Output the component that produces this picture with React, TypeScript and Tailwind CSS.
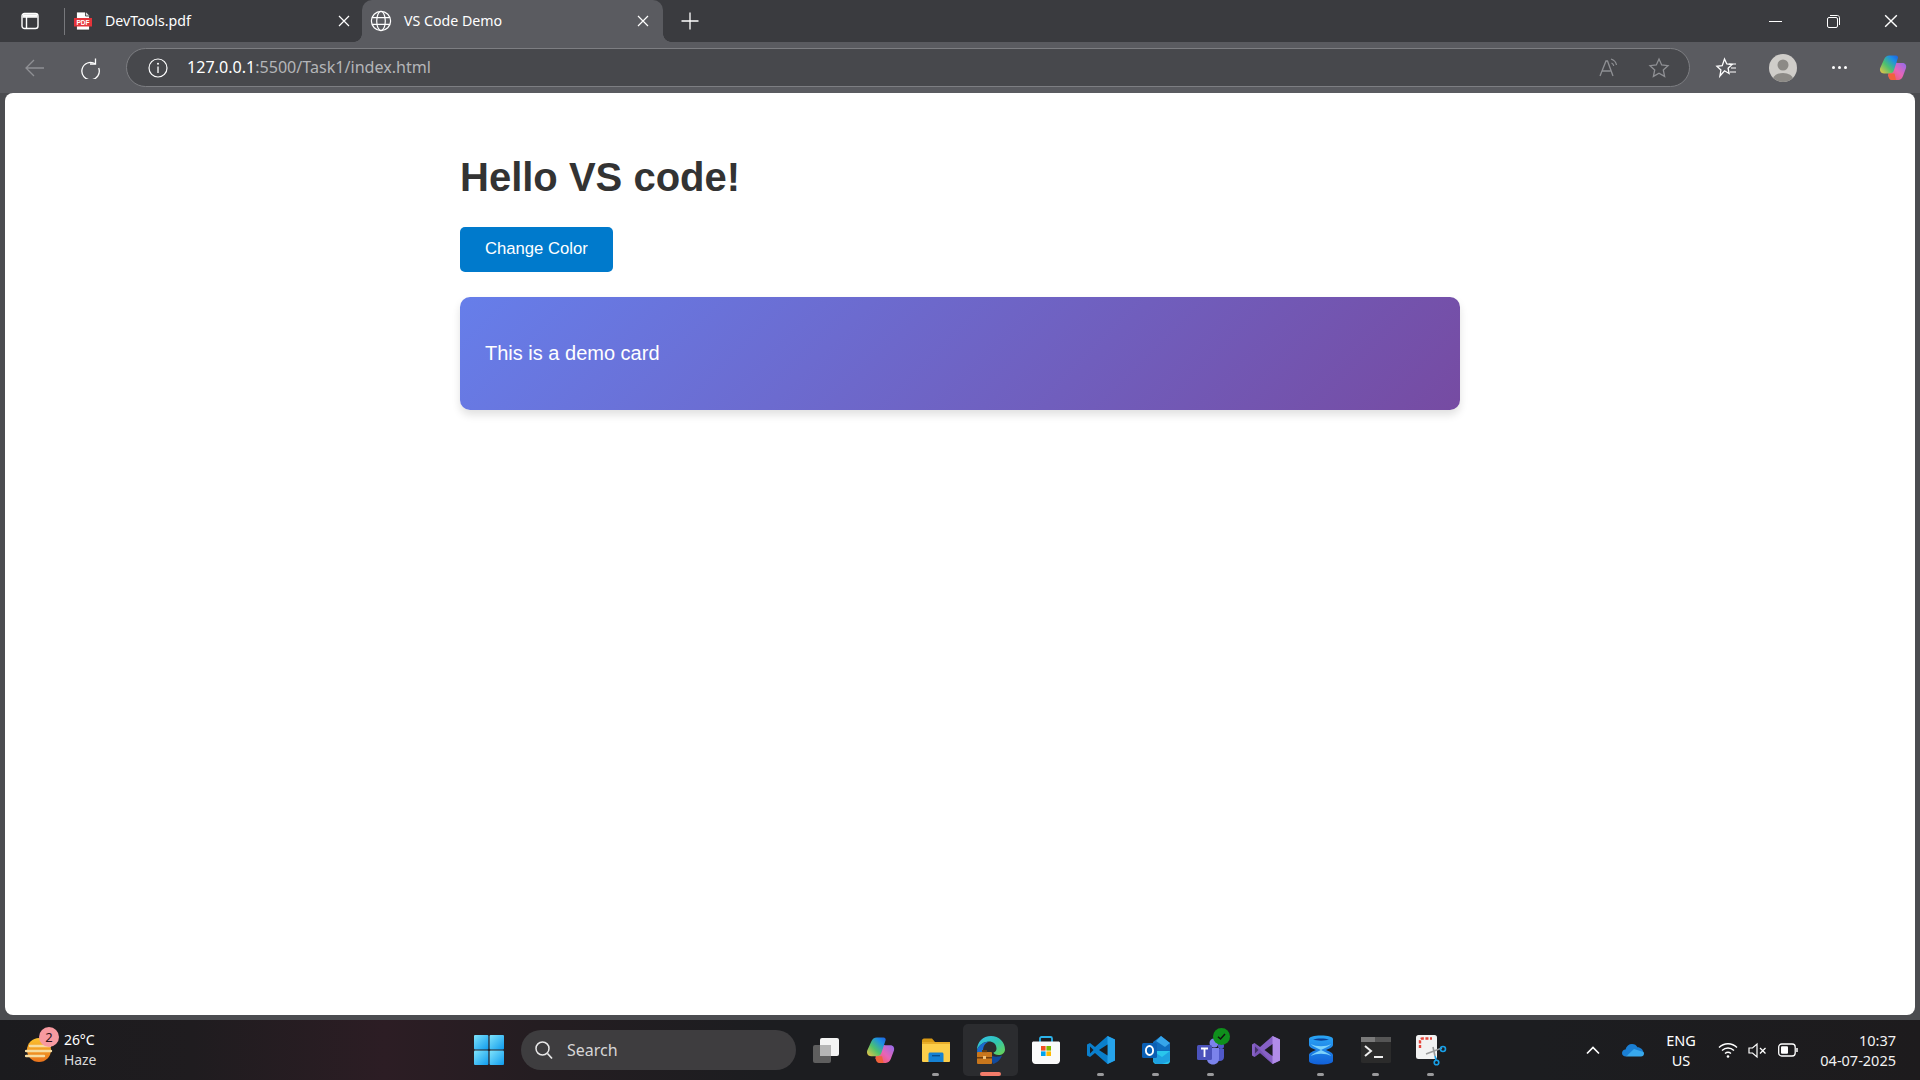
import React from "react";

const ui = { fontFamily: '"Noto Sans", "Open Sans", sans-serif' };

function Svg({ s = 20, w, h, vb = "0 0 20 20", c = "", children }: any) {
  return (
    <svg width={w ?? s} height={h ?? s} viewBox={vb} fill="none" className={"block shrink-0 " + c}>
      {children}
    </svg>
  );
}

const SidebarIcon = () => (
  <Svg s={18} vb="0 0 18 18">
    <rect x="1" y="1.5" width="16" height="15" rx="2.5" stroke="#fff" strokeWidth="1.4" />
    <path d="M1.5 5h15M5.5 5v11" stroke="#fff" strokeWidth="1.4" />
    <rect x="2" y="2.2" width="14" height="2.6" fill="#fff" />
  </Svg>
);

const PdfIcon = () => (
  <Svg s={20} vb="0 0 20 20">
    <path d="M3.5 1h9l4 4v14h-13z" fill="#fff" stroke="#333" strokeWidth=".8" />
    <path d="M12.5 1v4h4" fill="#ddd" stroke="#333" strokeWidth=".8" />
    <rect x="1" y="7" width="18" height="8.5" fill="#e5343a" />
    <text x="10" y="13.7" textAnchor="middle" fontSize="6.6" fontWeight="700" fill="#fff" fontFamily="Liberation Sans, sans-serif">PDF</text>
  </Svg>
);

const Globe = () => (
  <Svg s={22} vb="0 0 22 22">
    <g stroke="#fff" strokeWidth="1.2">
      <circle cx="11" cy="11" r="9.6" />
      <ellipse cx="11" cy="11" rx="4.3" ry="9.6" />
      <path d="M2 7.6h18M2 14.4h18" />
    </g>
  </Svg>
);

const X = ({ s = 12 }: { s?: number }) => (
  <Svg s={s} vb="0 0 12 12">
    <path d="M1 1l10 10M11 1L1 11" stroke="#fff" strokeWidth="1.2" />
  </Svg>
);

const CopilotMark = ({ s = 28, id = "a" }: { s?: number; id?: string }) => (
  <Svg s={s} vb="0 0 28 28">
    <defs>
      <linearGradient id={"cpA" + id} x1="0" y1="1" x2="1" y2="0">
        <stop offset="0" stopColor="#f6c344" />
        <stop offset=".4" stopColor="#4fc26c" />
        <stop offset=".75" stopColor="#1c8fe6" />
        <stop offset="1" stopColor="#1f5fe0" />
      </linearGradient>
      <linearGradient id={"cpB" + id} x1="0" y1="1" x2="1" y2="0">
        <stop offset="0" stopColor="#f4554a" />
        <stop offset=".5" stopColor="#e765b8" />
        <stop offset="1" stopColor="#8a6cf0" />
      </linearGradient>
    </defs>
    <path d="M12 8l-2 8-1 6 4 4h6c2.500 0 4-1.500 5-4l3-8c.8-2.800-.8-5-3.500-5H19z" fill={`url(#cpB${id})`} />
    <path d="M10.500 1.500H17c1.300 0 2.200 1 2 2.300L15 16c-.6 2-1.900 3.500-4 3.500H5c-3 0-4.700-2.800-3.800-5.500L5 5.500C6 3 8 1.500 10.500 1.500z" fill={`url(#cpA${id})`} />
    <path d="M10 19.500h5.500l1.500 6.500h-4.500C10.500 26 9.500 24 9.500 22z" fill="#f0623c" />
  </Svg>
);

const TaskView = () => (
  <Svg s={28} vb="0 0 28 28">
    <rect x="1" y="9" width="18" height="18" rx="2" fill="#5e5e5e" />
    <rect x="8" y="2" width="19" height="18" rx="2" fill="#f4f4f4" />
    <rect x="8" y="9" width="11" height="11" fill="#b5b5b5" />
  </Svg>
);

const Folder = () => (
  <Svg s={30} vb="0 0 30 30">
    <path d="M1 5.500C1 4.500 1.800 3.500 3 3.500h8l3 3.500H1z" fill="#d99a14" />
    <rect x="1" y="7" width="28" height="20" rx="1" fill="#fcce4a" />
    <rect x="1" y="7" width="28" height="2" fill="#e9ae2a" />
    <path d="M7.500 19c0-.8.700-1.500 1.500-1.500h12c.8 0 1.500.7 1.500 1.500v8h-15z" fill="#1682d4" />
    <rect x="11" y="20" width="8" height="1.400" fill="#0a4f8c" />
  </Svg>
);

const EdgeBiz = () => (
  <Svg s={30} vb="0 0 30 30">
    <defs>
      <linearGradient id="edA" x1="0" y1="0" x2="1" y2="1">
        <stop offset="0" stopColor="#35c1f1" />
        <stop offset=".5" stopColor="#2fc5b0" />
        <stop offset="1" stopColor="#6dd34d" />
      </linearGradient>
    </defs>
    <path d="M1 15C1 7 7 1 15 1c8 0 14 6 14 13.500 0 3.500-3 5.500-6.500 5.500-2.500 0-5-1-5-2.500 2-.5 3-2 3-4C20.500 9 17 6.500 13 6.500 8 6.500 3 10 1 15z" fill="url(#edA)" />
    <path d="M1 15c2-5 7-8.500 12-8.500-4 1.500-6 5-6 9 0 4.500 3 9 8.500 11-.5 1-1 1.500-.5 2.500C7 29 1 23 1 15z" fill="#1a6cd0" />
    <path d="M16 21c3 1 7 1 10-.5-1.500 4-5 7.500-9 8.500-1.500-3-1.500-6-1-8z" fill="#114a9e" />
    <rect x="1" y="17" width="15" height="12" rx="1" fill="#c8761c" />
    <rect x="1" y="22" width="15" height="1.500" fill="#6e3c0c" />
    <rect x="6" y="15" width="5" height="2.200" fill="#5e3c14" />
    <rect x="7" y="21" width="3" height="3" fill="#f1c27a" />
  </Svg>
);

const Store = () => (
  <Svg s={30} vb="0 0 30 30">
    <path d="M9 7V3.500c0-1 .8-1.500 1.500-1.500h9c.7 0 1.500.5 1.500 1.500V7" stroke="#2cb3ea" strokeWidth="1.800" />
    <path d="M1 8c0-1 .8-1.500 1.500-1.500h25c.7 0 1.500.5 1.500 1.500v17.500c0 1.900-1.500 3.500-3.500 3.500h-21C2.500 29 1 27.400 1 25.500z" fill="#fafafa" />
    <rect x="10" y="11" width="4.600" height="4.600" fill="#f25022" />
    <rect x="15.400" y="11" width="4.600" height="4.600" fill="#7fba00" />
    <rect x="10" y="16.400" width="4.600" height="4.600" fill="#00a4ef" />
    <rect x="15.400" y="16.400" width="4.600" height="4.600" fill="#ffb900" />
  </Svg>
);

const VSCode = () => (
  <Svg s={30} vb="0 0 30 30">
    <path d="M21.500 1l7.500 3.500v21L21.500 29 9 18l-5 4-3-1.500V9.500L4 8l5 4z" fill="#0a7fcc" />
    <path d="M21.500 1l7.500 3.500v21L21.500 29z" fill="#26a3ea" />
    <path d="M21.500 9.500L13 15l8.500 5.500z" fill="#1c1d20" />
    <path d="M4 11.500V18.500L7.500 15z" fill="#1c1d20" />
  </Svg>
);

const Outlook = () => (
  <Svg s={30} vb="0 0 30 30">
    <path d="M12 7l8-6 9 7v8H12z" fill="#0f6cbd" />
    <path d="M20 1l9 7-5 4-9-6z" fill="#36a5ea" />
    <path d="M12 16h17v10c0 1.500-1 3-3 3H15c-1.500 0-3-1.500-3-3z" fill="#29c6ec" />
    <path d="M12 16l9 6 8-6v10L21 29h-6l-3-3z" fill="#1ea1e0" />
    <rect x="1" y="8" width="15" height="15" rx="1.500" fill="#0a5fb4" />
    <ellipse cx="8.500" cy="15.500" rx="3.600" ry="4.500" stroke="#fff" strokeWidth="1.900" />
  </Svg>
);

const Teams = () => (
  <div className="relative w-[30px] h-[30px]">
    <Svg s={30} vb="0 0 30 30">
      <circle cx="18" cy="8" r="4.500" fill="#7b83eb" />
      <circle cx="25" cy="11" r="3" fill="#5059c9" />
      <path d="M21 14h7v8c0 2.500-2 4-4 4h-3z" fill="#5059c9" />
      <path d="M9 13h14v11c0 3-2.500 5.500-6 5.500S11 27 11 24z" fill="#7b83eb" />
      <rect x="1" y="10" width="15" height="15" rx="1.500" fill="#4b53bc" />
      <path d="M5 13.500h7M8.500 13.500V22" stroke="#fff" strokeWidth="1.800" />
    </Svg>
    <div className="absolute -top-[7px] -right-[4px] w-[17px] h-[17px] rounded-full bg-[#0f8f1c] flex items-center justify-center">
      <Svg s={11} vb="0 0 11 11"><path d="M2 5.800L4.500 8 9 3" stroke="#111" strokeWidth="1.500" /></Svg>
    </div>
  </div>
);

const VS = () => (
  <Svg s={30} vb="0 0 30 30">
    <path d="M21.500 1L29 4.500v21L21.500 29 9 18 3.500 22 1 20.500V9.500L3.500 8 9 12z" fill="#8661c5" />
    <path d="M21.500 1L29 4.500v21L21.500 29z" fill="#b18ce8" />
    <path d="M21.500 9l-8 6 8 6z" fill="#1c1d20" />
    <path d="M4 11.500v7l3.500-3.500z" fill="#1c1d20" />
    <path d="M3.500 8L21.500 29 9 18 3.500 22z" fill="#6b48ab" opacity=".5" />
  </Svg>
);

const Cross = () => (
  <Svg s={30} vb="0 0 30 30">
    <defs>
      <linearGradient id="xA" x1="0" y1="0" x2="0" y2="1">
        <stop offset="0" stopColor="#2aa5f5" />
        <stop offset="1" stopColor="#1260d8" />
      </linearGradient>
    </defs>
    <path d="M3 4c0-2 5-3.500 12-3.500S27 2 27 4v6c0 2-4 4-7 5 3 1 7 3 7 5v6c0 2-5 3.500-12 3.500S3 28 3 26v-6c0-2 4-4 7-5-3-1-7-3-7-5z" fill="url(#xA)" />
    <path d="M5 9c5 3 15 3 20 0-1 2-6 4-10 6-4-2-9-4-10-6zM5 21c1-2 6-4 10-6 4 2 9 4 10 6-5-3-15-3-20 0z" fill="#7dd3fb" />
    <path d="M7 4.500c4-1.500 12-1.500 16 0-4 1.500-12 1.500-16 0z" fill="#0b3e94" />
  </Svg>
);

const Terminal = () => (
  <Svg s={30} vb="0 0 30 30">
    <rect x="0" y="2" width="30" height="26" rx="1.500" fill="#2b2b2b" />
    <rect x="0" y="2" width="30" height="5" fill="#7a7a7a" />
    <rect x="14" y="2" width="16" height="5" fill="#555" />
    <path d="M4 11l6 5-6 5" stroke="#eee" strokeWidth="2" />
    <path d="M13 22h9" stroke="#eee" strokeWidth="2" />
  </Svg>
);

const Snip = () => (
  <Svg s={32} vb="0 0 32 32">
    <rect x="1" y="1" width="21" height="24" rx="2.500" fill="#f2f2f2" />
    <path d="M5 14V7c0-1.500 1-2.500 2.500-2.500H17" stroke="#e5453a" strokeWidth="2.400" strokeDasharray="3 1.600" />
    <path d="M11 20l16-6" stroke="#999" strokeWidth="1.600" />
    <path d="M18 13l2 9" stroke="#999" strokeWidth="1.600" />
    <circle cx="28" cy="15" r="2.500" stroke="#18a0e8" strokeWidth="1.600" />
    <path d="M20 22l1 4" stroke="#18a0e8" strokeWidth="1.600" />
    <circle cx="21.500" cy="28.500" r="2.300" stroke="#18a0e8" strokeWidth="1.600" />
  </Svg>
);

const apps: [React.ReactNode, string][] = [
  [<TaskView />, ""],
  [<CopilotMark s={29} id="t" />, ""],
  [<Folder />, "dot"],
  [<EdgeBiz />, "active"],
  [<Store />, ""],
  [<VSCode />, "dot"],
  [<Outlook />, "dot"],
  [<Teams />, "dot"],
  [<VS />, ""],
  [<Cross />, "dot"],
  [<Terminal />, "dot"],
  [<Snip />, "dot"],
];

function TaskIcon({ icon, state }: { icon: React.ReactNode; state: string }) {
  return (
    <div className={"relative w-[55px] h-[52px] flex items-center justify-center rounded-[5px] " + (state === "active" ? "bg-[#2b2c2f]" : "")}>
      {icon}
      {state === "dot" && <div className="absolute bottom-0 left-[24px] w-[7px] h-[3px] rounded-full bg-[#9a9a9c]" />}
      {state === "active" && <div className="absolute bottom-0 left-[17px] w-[21px] h-[4px] rounded-full bg-[#f47c6a]" />}
    </div>
  );
}

export default function App() {
  return (
    <div className="w-[1920px] h-[1080px] overflow-hidden flex flex-col bg-[#4b4c50]" style={ui}>
      {/* title bar */}
      <div className="h-[42px] shrink-0 bg-[#3a3b3f] flex items-center text-white">
        <div className="ml-[21px] w-[18px]"><SidebarIcon /></div>
        <div className="ml-[25px] w-px h-[27px] bg-[#77787c]" />
        <div className="ml-[8px] w-[20px]"><PdfIcon /></div>
        <div className="ml-[12px] w-[235px] text-[14.2px] leading-none">DevTools.pdf</div>
        <div className="w-[12px] -ml-[2px]"><X /></div>
        <div className="relative ml-[12px] self-stretch w-[301px] bg-[#5a5b60] rounded-t-[10px] flex items-center">
          <div className="ml-[8px]"><Globe /></div>
          <div className="ml-[12px] w-[233px] text-[14.2px] leading-none">VS Code Demo</div>
          <X />
          <div className="absolute bottom-0 -left-[8px] w-[8px] h-[8px] bg-[radial-gradient(circle_at_0_0,#3a3b3f_7.5px,#5a5b60_8px)]" />
          <div className="absolute bottom-0 -right-[8px] w-[8px] h-[8px] bg-[radial-gradient(circle_at_100%_0,#3a3b3f_7.5px,#5a5b60_8px)]" />
        </div>
        <div className="ml-[18px]">
          <Svg s={18} vb="0 0 18 18"><path d="M9 0.500v17M0.500 9h17" stroke="#fff" strokeWidth="1.300" /></Svg>
        </div>
        <div className="ml-auto flex items-center">
          <div className="w-[58px] flex justify-center"><div className="w-[13px] h-px bg-white" /></div>
          <div className="w-[58px] flex justify-center">
            <Svg s={13} vb="0 0 13 13">
              <rect x=".5" y="2.500" width="10" height="10" rx="1.500" stroke="#fff" />
              <path d="M3 .5h7.500c1 0 2 1 2 2V10" stroke="#fff" />
            </Svg>
          </div>
          <div className="w-[58px] flex justify-center mr-[0px]"><X s={14} /></div>
        </div>
      </div>

      {/* toolbar */}
      <div className="h-[51px] shrink-0 bg-[#5a5b60] flex items-center">
        <div className="ml-[24px]">
          <Svg s={22} vb="0 0 22 22"><path d="M20 11H2M10 3l-8 8 8 8" stroke="#8f9094" strokeWidth="1.300" /></Svg>
        </div>
        <div className="ml-[33px]">
          <Svg s={22} vb="0 0 22 22">
            <path d="M16.500 1.500v5.500H11" stroke="#fff" strokeWidth="1.300" />
            <path d="M16.300 6.800A8.700 8.700 0 1 0 19.700 11" stroke="#fff" strokeWidth="1.300" />
          </Svg>
        </div>
        <div className="ml-[25px] w-[1564px] h-[39px] rounded-full border border-[#7d7e82] bg-[#47484c] flex items-center">
          <div className="ml-[21px]">
            <Svg s={20} vb="0 0 20 20">
              <circle cx="10" cy="10" r="9" stroke="#fff" strokeWidth="1.200" />
              <path d="M10 8.500V15" stroke="#fff" strokeWidth="1.300" />
              <circle cx="10" cy="5.800" r="1" fill="#fff" />
            </Svg>
          </div>
          <div className="ml-[19px] text-[16.1px] text-[#b4b5b8] leading-none"><span className="text-white">127.0.0.1</span>:5500/Task1/index.html</div>
          <div className="ml-auto">
            <Svg s={22} vb="0 0 22 22">
              <path d="M2 19L8 4h1.500L15 19M4.500 14h8" stroke="#8f9094" strokeWidth="1.300" />
              <path d="M13 2c3 1 5 3 5.500 6M13.500 6c1.500.5 2 1.500 2.300 3" stroke="#8f9094" strokeWidth="1.200" />
            </Svg>
          </div>
          <div className="ml-[28px] mr-[19px]">
            <Svg s={22} vb="0 0 22 22">
              <path d="M11 2l2.700 5.900 6.300.8-4.700 4.300 1.300 6.400-5.600-3.200-5.600 3.200 1.300-6.400L2 8.700l6.300-.8z" stroke="#8f9094" strokeWidth="1.300" />
            </Svg>
          </div>
        </div>
        <div className="ml-[25px]">
          <Svg s={22} vb="0 0 22 22">
            <path d="M9.500 2l2.300 5 5.200.6-3.900 3.600 1 5.300-4.600-2.700L4.900 19l1-6-4-3.700 5.300-.6z" stroke="#fff" strokeWidth="1.300" />
            <path d="M14 7h7M16 11h5M15 15h6" stroke="#fff" strokeWidth="1.200" />
          </Svg>
        </div>
        <div className="ml-[32px] w-[28px] h-[28px] rounded-full bg-[#cfcdc9] overflow-hidden">
          <Svg s={28} vb="0 0 28 28">
            <circle cx="14" cy="11" r="5.500" fill="#8c8a86" />
            <ellipse cx="14" cy="25" rx="10" ry="6" fill="#8c8a86" />
          </Svg>
        </div>
        <div className="ml-[35px] flex gap-[3px]">
          <div className="w-[3px] h-[3px] rounded-full bg-white" />
          <div className="w-[3px] h-[3px] rounded-full bg-white" />
          <div className="w-[3px] h-[3px] rounded-full bg-white" />
        </div>
        <div className="ml-[32px]"><CopilotMark s={28} id="b" /></div>
      </div>

      {/* page */}
      <div className="h-[922px] shrink-0 mx-[5px] bg-white rounded-t-[8px] rounded-b-[8px]">
        <div className="w-[1000px] mx-auto pt-[61px] font-['Liberation_Sans',Arial,sans-serif]">
          <h1 className="text-[40px] leading-[46px] font-bold text-[#333333] mb-[27px]">Hello VS code!</h1>
          <button className="h-[45px] px-[25px] pb-[2px] bg-[#007acc] text-white text-[16.67px] rounded-[5px] block">Change Color</button>
          <div className="mt-[25px] h-[113px] px-[25px] pb-[2px] rounded-[10px] flex items-center text-[20px] text-white bg-[linear-gradient(135deg,#667eea,#764ba2)] shadow-[0_5px_8px_rgba(0,0,0,0.12)]">
            This is a demo card
          </div>
        </div>
      </div>

      {/* taskbar */}
      <div className="mt-auto h-[60px] shrink-0 flex items-center text-white bg-[linear-gradient(90deg,#1b1b1e_0%,#1f1c1f_10%,#2c1d24_20%,#241d21_28%,#1c1d20_40%,#1c1d20_80%,#1d1b1d_100%)]">
        <div className="relative ml-[25px] w-[27px] h-[30px]">
          <Svg s={30} vb="0 0 30 30">
            <defs>
              <linearGradient id="sun" x1="0" y1="0" x2="0" y2="1">
                <stop offset="0" stopColor="#fbc32f" />
                <stop offset="1" stopColor="#e8721c" />
              </linearGradient>
            </defs>
            <circle cx="14" cy="15" r="12" fill="url(#sun)" />
            <path d="M5 11h20M1 16h25M1 21h18" stroke="#f6dca0" strokeWidth="2.400" strokeLinecap="round" />
          </Svg>
          <div className="absolute -top-[8px] left-[14px] w-[20px] h-[20px] rounded-full bg-[#f79aa0] text-[#2a1218] text-[13px] leading-[20px] text-center">2</div>
        </div>
        <div className="ml-[12px] w-[60px] text-[14px] leading-[20px] tracking-[-0.1px]">
          <div>26°C</div>
          <div className="text-[#d8d8d8]">Haze</div>
        </div>
        <div className="ml-[350px]">
          <Svg s={30} vb="0 0 30 30">
            <defs>
              <linearGradient id="win" x1="0" y1="0" x2="1" y2="1">
                <stop offset="0" stopColor="#7fe3fb" />
                <stop offset="1" stopColor="#0f9bee" />
              </linearGradient>
            </defs>
            <rect x="0" y="0" width="14.400" height="14.400" rx="1" fill="url(#win)" />
            <rect x="15.600" y="0" width="14.400" height="14.400" rx="1" fill="url(#win)" />
            <rect x="0" y="15.600" width="14.400" height="14.400" rx="1" fill="url(#win)" />
            <rect x="15.600" y="15.600" width="14.400" height="14.400" rx="1" fill="url(#win)" />
          </Svg>
        </div>
        <div className="ml-[17px] w-[275px] h-[40px] rounded-full bg-[#3e3d3f] flex items-center">
          <div className="ml-[13px]">
            <Svg s={20} vb="0 0 20 20">
              <circle cx="8.500" cy="8.500" r="6.500" stroke="#e8e8e8" strokeWidth="1.500" />
              <path d="M13.500 13.500L18 18.500" stroke="#e8e8e8" strokeWidth="1.700" />
            </Svg>
          </div>
          <span className="ml-[13px] text-[16px] text-[#d6d6d6]">Search</span>
        </div>
        <div className="ml-[2px] flex items-center">
          {apps.map(([icon, state], i) => (
            <TaskIcon key={i} icon={icon} state={state} />
          ))}
        </div>
        <div className="ml-[127px]">
          <Svg s={16} vb="0 0 16 16"><path d="M2 11.500L8 5.500l6 6" stroke="#fff" strokeWidth="1.700" /></Svg>
        </div>
        <div className="ml-[21px]">
          <Svg w={22} h={14} vb="0 0 22 14">
            <path d="M4 13.500C1.500 13.500 0 12 0 10c0-2 1.500-3.300 3.500-3.500C4.300 3 7 1 10 1c2.500 0 4.500 1.200 5.500 3.300 3 0 5.500 2.300 6 5.200H12z" fill="#1a7fd4" />
            <path d="M4 13.500h15c1.700 0 3-1.200 3-3 0-.5-.1-1-.5-1.500L12 6z" fill="#38a8ec" />
          </Svg>
        </div>
        <div className="ml-[20px] w-[34px] text-[14.5px] leading-[20px] text-center">
          <div>ENG</div>
          <div>US</div>
        </div>
        <div className="ml-[20px]">
          <Svg s={20} vb="0 0 20 20">
            <path d="M1 7.500c5-5 13-5 18 0M4 10.500c3.500-3.300 8.500-3.300 12 0M7 13.500c1.800-1.500 4.200-1.500 6 0" stroke="#fff" strokeWidth="1.400" />
            <circle cx="10" cy="16.500" r="1.300" fill="#fff" />
          </Svg>
        </div>
        <div className="ml-[10px]">
          <Svg s={19} vb="0 0 19 19">
            <path d="M1 7h3.500L9 3v13l-4.500-4H1z" stroke="#fff" strokeWidth="1.200" />
            <path d="M12 7l5.500 5.500M17.500 7L12 12.500" stroke="#fff" strokeWidth="1.300" />
          </Svg>
        </div>
        <div className="ml-[11px]">
          <Svg w={20} h={14} vb="0 0 20 14">
            <rect x=".7" y="1" width="16.500" height="12" rx="3" stroke="#fff" strokeWidth="1.300" />
            <rect x="3" y="3.200" width="7" height="7.600" rx="1" fill="#fff" />
            <path d="M19 5v4" stroke="#fff" strokeWidth="1.500" />
          </Svg>
        </div>
        <div className="ml-auto mr-[24px] text-right text-[14.5px] leading-[20px] text-[#f2f2f2]">
          <div>10:37</div>
          <div>04-07-2025</div>
        </div>
      </div>
    </div>
  );
}
